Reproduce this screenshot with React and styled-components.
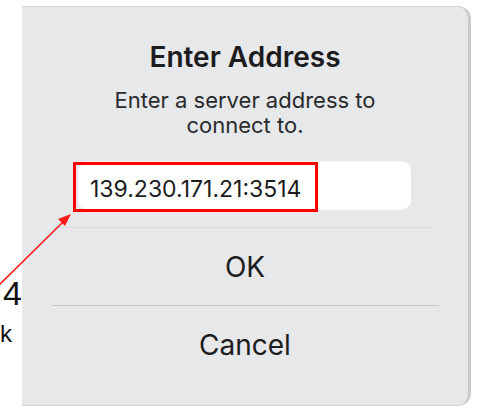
import styled, { createGlobalStyle } from "styled-components";

const GlobalStyle = createGlobalStyle`
  html, body {
    margin: 0;
    padding: 0;
    background: #ffffff;
  }
  body {
    font-family: Inter, "Liberation Sans", sans-serif;
    -webkit-font-smoothing: antialiased;
  }
`;

function App() {
  return (
    <Page>
      <GlobalStyle />
      <Margin>
        <StepNumber>4</StepNumber>
        <StepNote>k</StepNote>
      </Margin>
      <Dialog>
        <Title>Enter Address</Title>
        <Message>
          Enter a server address to
          <br />
          connect to.
        </Message>
        <Field>
          <Input defaultValue="139.230.171.21:3514" spellCheck={false} />
          <Highlight />
        </Field>
        <FaintRule />
        <Action>OK</Action>
        <Rule />
        <Action>Cancel</Action>
      </Dialog>
      <Pointer width="80" height="90" viewBox="0 0 80 90">
        <line x1="-2" y1="72" x2="64" y2="7" stroke="#ff1a1a" strokeWidth="1.6" />
        <polygon points="71,0 58,5 65,12" fill="#ff1a1a" />
      </Pointer>
    </Page>
  );
}

export default App;

const Page = styled.div`
  position: relative;
  display: flex;
  align-items: flex-start;
  width: 479px;
  height: 408px;
  overflow: hidden;
  background: #ffffff;
`;

const Margin = styled.div`
  width: 22px;
  flex-shrink: 0;
  overflow: hidden;
  padding-top: 274px;
  display: flex;
  flex-direction: column;
  align-items: flex-end;
  font-family: "Liberation Sans", Arial, sans-serif;
  color: #111;
`;

const StepNumber = styled.div`
  font-size: 34px;
  line-height: 38px;
`;

const StepNote = styled.div`
  font-size: 24px;
  line-height: 28px;
  margin-top: 8px;
  align-self: flex-start;
`;

const Dialog = styled.div`
  width: 449px;
  height: 400px;
  margin-top: 6px;
  box-sizing: border-box;
  padding-top: 33px;
  background: #e6e8ea;
  border-top: 1px solid #d2d4d6;
  border-right: 3px solid #c9cbcd;
  border-bottom: 1px solid #d2d4d6;
  border-radius: 0 13px 13px 0;
  display: flex;
  flex-direction: column;
  align-items: center;
  color: #1c1c1e;
`;

const Title = styled.div`
  font-size: 28px;
  line-height: 34px;
  font-weight: 600;
`;

const Message = styled.div`
  margin-top: 14px;
  font-size: 22px;
  line-height: 25px;
  text-align: center;
  color: #2a2a2c;
`;

const Field = styled.div`
  position: relative;
  margin-top: 22px;
  margin-left: 55px;
  align-self: flex-start;
`;

const Input = styled.input`
  display: block;
  width: 334px;
  height: 50px;
  box-sizing: border-box;
  padding: 8px 13px 0;
  line-height: 42px;
  border: none;
  border-radius: 10px;
  background: #ffffff;
  box-shadow: inset 1px 1px 2px rgba(0, 0, 0, 0.12);
  font-family: Inter, "Liberation Sans", sans-serif;
  font-size: 23px;
  color: #1c1c1e;
  outline: none;
`;

const Highlight = styled.div`
  position: absolute;
  left: -4px;
  top: 2px;
  width: 245px;
  height: 50px;
  box-sizing: border-box;
  border: 3px solid #ff0000;
  pointer-events: none;
`;

const FaintRule = styled.div`
  width: 382px;
  height: 1px;
  margin-top: 17px;
  background: #dcdee0;
`;

const Rule = styled.div`
  width: 387px;
  height: 1px;
  background: #c6c8ca;
`;

const Action = styled.div`
  height: 77px;
  display: flex;
  align-items: center;
  justify-content: center;
  font-size: 28px;
  line-height: 1;
  color: #1c1c1e;
`;

const Pointer = styled.svg`
  position: absolute;
  left: 0;
  top: 214px;
  overflow: visible;
`;
